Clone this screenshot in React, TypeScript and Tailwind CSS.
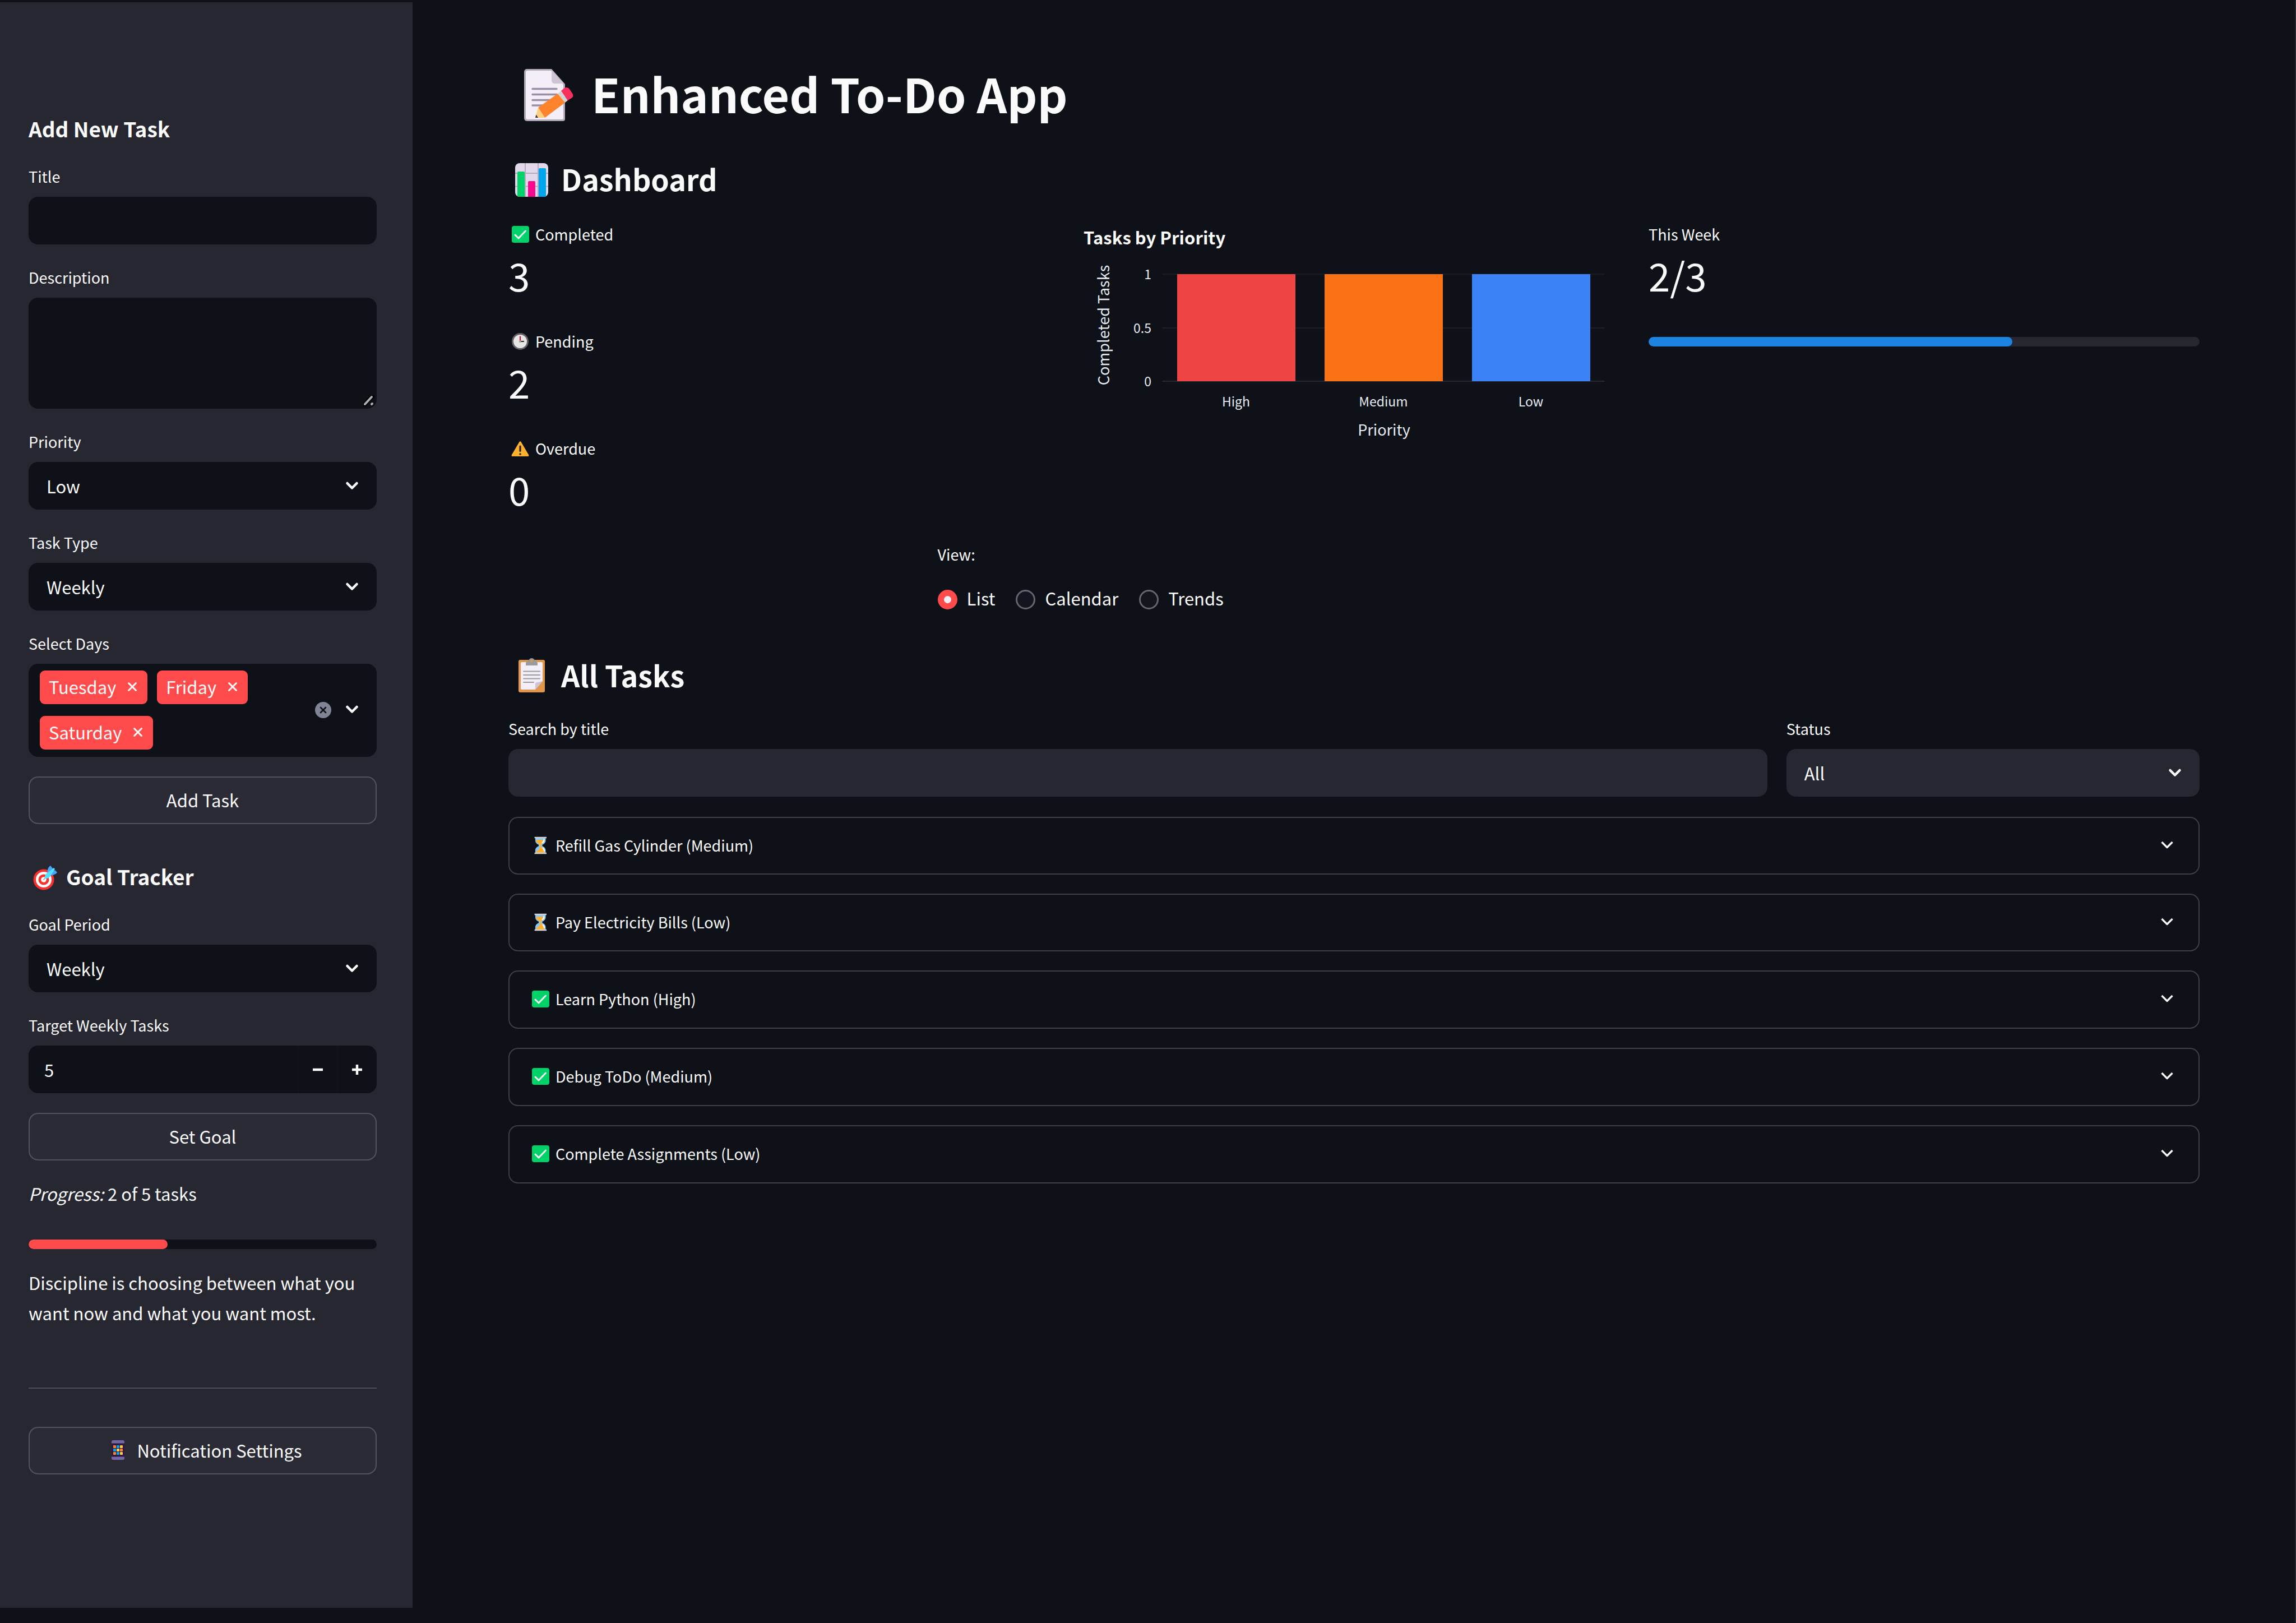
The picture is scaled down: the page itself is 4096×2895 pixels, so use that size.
import { useState, type ReactNode } from "react";

function MemoIcon() {
  return (
    <svg aria-hidden="true" className="h-28 w-[148px] shrink-0" viewBox="0 0 148 112">
      <path d="M33 13h44l24 27v62a4 4 0 0 1-4 4H33a5 5 0 0 1-5-5V18a5 5 0 0 1 5-5z" fill="#b4acbc" />
      <path d="M34 16h42l22 25v60a2 2 0 0 1-2 2H34a3 3 0 0 1-3-3V19a3 3 0 0 1 3-3z" fill="#f3eef8" />
      <path d="M77 15l22 24H82a5 5 0 0 1-5-5z" fill="#cdc4d6" />
      <path d="M43 48.500h43M43 58.500h43M43 68.500h34M43 78h20" stroke="#998ea4" strokeWidth="3.500" strokeLinecap="round" />
      <path d="M53 82l35-25 13 16-36 27z" fill="#ff822d" />
      <path d="M53 82l-5 18h17z" fill="#ffce7c" />
      <path d="M49.500 94.500l-1.500 5.500h5z" fill="#402a32" />
      <path d="M88 57l6-5 12 17-5 4z" fill="#d3d3d3" />
      <path d="M94 52l6-5c3-2 7-1 9 2l4 6c3 4 3 7 1 9l-8 5z" fill="#f92f60" />
    </svg>
  );
}

function ChartIcon() {
  return (
    <svg aria-hidden="true" className="h-[72px] w-[94px] shrink-0" viewBox="0 0 94 72">
      <rect x="12" y="8" width="59" height="60" rx="8" fill="#e1d8ec" />
      <path d="M30 8v60M53 8v60M12 26h59M12 49.500h59" stroke="#b4acbc" strokeWidth="2" />
      <path d="M16 25a2 2 0 0 1 2-2h9a2 2 0 0 1 2 2v43h-9q-3 0-4-1z" fill="#00d26a" />
      <path d="M35 42a2 2 0 0 1 2-2h9a2 2 0 0 1 2 2v26H35z" fill="#f70a8d" />
      <path d="M54 19a2 2 0 0 1 2-2h9a2 2 0 0 1 2 2v48q-2 1-4 1h-9z" fill="#00a6ed" />
    </svg>
  );
}

function ClipboardIcon() {
  return (
    <svg aria-hidden="true" className="h-[72px] w-[94px] shrink-0" viewBox="0 0 94 72">
      <rect x="18" y="9" width="47" height="58" rx="3" fill="#e19747" />
      <path d="M24 13h35a2 2 0 0 1 2 2v32L48 62H24a2 2 0 0 1-2-2V15a2 2 0 0 1 2-2z" fill="#f3eef8" />
      <path d="M48 62V53q0-4 4-4l9-2z" fill="#cdc4d6" />
      <path d="M31 19q-1-8 5-9 2-4 5.500-4t5.500 4q6 1 5 9z" fill="#9b9b9b" />
      <circle cx="41.500" cy="11" r="2.200" fill="#e19747" />
      <path d="M27 29.500h29M27 36h29M27 42.500h29M27 49h18" stroke="#9b9b9b" strokeWidth="2" strokeLinecap="round" />
    </svg>
  );
}

function CheckIcon() {
  return (
    <svg aria-hidden="true" className="h-12 w-12 shrink-0" viewBox="0 0 48 48">
      <rect x="6" y="9" width="31" height="30" rx="4" fill="#00d26a" />
      <path d="M12 25l6 6 12.500-13" fill="none" stroke="#f4f4f4" strokeWidth="3" strokeLinecap="round" strokeLinejoin="round" />
    </svg>
  );
}

function ClockIcon() {
  return (
    <svg aria-hidden="true" className="h-12 w-12 shrink-0" viewBox="0 0 48 48">
      <circle cx="21" cy="24" r="15" fill="#636363" />
      <circle cx="21" cy="24" r="12" fill="#e6e6e6" />
      <path d="M21 24h6" stroke="#212121" strokeWidth="2.200" strokeLinecap="round" />
      <path d="M21 24v-8.500" stroke="#ca0b4a" strokeWidth="2.200" strokeLinecap="round" />
      <circle cx="21" cy="24" r="2" fill="#9b9b9b" />
    </svg>
  );
}

function WarningIcon() {
  return (
    <svg aria-hidden="true" className="h-12 w-12 shrink-0" viewBox="0 0 48 48">
      <path d="M19.300 12.500q1.700-2.500 3.400 0l13.500 23q1 2.500-1.700 2.500H7.500q-2.700 0-1.700-2.500z" fill="#ffb02e" />
      <path d="M21 20v8.500" stroke="#212121" strokeWidth="3.200" strokeLinecap="round" />
      <circle cx="21" cy="34" r="1.800" fill="#212121" />
    </svg>
  );
}

function HourglassIcon() {
  return (
    <svg aria-hidden="true" className="h-12 w-12 shrink-0" viewBox="0 0 48 48">
      <path d="M12 10.500h18.500v4.500c0 4.500-3 6.500-6 7.800v2.400c3 1.300 6 3.300 6 7.800v4.500H12v-4.500c0-4.500 3-6.500 6-7.800v-2.400c-3-1.300-6-3.300-6-7.800z" fill="#83cbff" />
      <path d="M13.500 14h15c0 4.500-3 6.500-6.200 8v4c2.500 1.500 6.200 4.500 6.200 11h-15c0-2.500 2.500-5 6.200-6.500v-8.500c-3.200-1.500-6.200-3.500-6.200-8z" fill="#ffb02e" />
      <path d="M27.500 13.500c0 3-1.200 4.700-3 5.800M25.500 28.500c1.600 1.500 2.500 3 2.500 5.500" fill="none" stroke="#fff" strokeWidth="2" strokeLinecap="round" />
      <path d="M10.600 10h21.400M10.600 38h21.400" stroke="#d3d3d3" strokeWidth="2.400" />
    </svg>
  );
}

function TargetIcon() {
  return (
    <svg aria-hidden="true" className="h-[52px] w-[67px] shrink-0" viewBox="0 0 67 52">
      <circle cx="27" cy="32" r="18.500" fill="#f8312f" />
      <circle cx="27" cy="32" r="14" fill="#fff" />
      <circle cx="27" cy="32" r="9.500" fill="#f8312f" />
      <circle cx="27" cy="32" r="4.800" fill="#fff" />
      <path d="M27 32l7-8" stroke="#9b9b9b" strokeWidth="1.600" strokeLinecap="round" />
      <path d="M34 20c-1-6 1-10 5-13l4 5v5l-6 7z" fill="#46a4fb" />
      <path d="M37 24l5-7 5-2 4 4c-3 4-8 6-14 5z" fill="#46a4fb" />
      <path d="M29 30c-1-5 2-9 6-11l10-8 2 2-7 11c-2 4-6 7-11 6z" fill="#50e2ff" />
    </svg>
  );
}

function PhoneIcon() {
  return (
    <svg aria-hidden="true" className="ml-3 h-[52px] w-9 shrink-0" viewBox="0 0 36 52">
      <rect x="3" y="8" width="23" height="35" rx="3" fill="#321b41" />
      <path d="M6 8h17a3 3 0 0 1 3 3v2.500H3V11a3 3 0 0 1 3-3zM3 37.500h23V40a3 3 0 0 1-3 3H6a3 3 0 0 1-3-3z" fill="#7467a8" />
      <g fill="#ff822d">
        <rect x="6" y="17" width="5" height="5" rx="1" />
        <rect x="18" y="23" width="5" height="5" rx="1" />
        <rect x="6" y="29" width="5" height="5" rx="1" />
      </g>
      <g fill="#00a6ed">
        <rect x="12" y="17" width="5" height="5" rx="1" />
        <rect x="6" y="23" width="5" height="5" rx="1" />
        <rect x="12" y="29" width="5" height="5" rx="1" />
      </g>
      <g fill="#ffce3d">
        <rect x="18" y="17" width="5" height="5" rx="1" />
        <rect x="12" y="23" width="5" height="5" rx="1" />
        <rect x="18" y="29" width="5" height="5" rx="1" />
      </g>
    </svg>
  );
}

function SelectChevron() {
  return (
    <svg aria-hidden="true" className="h-8 w-8" viewBox="0 0 32 32" fill="none" stroke="#fafafa" strokeWidth="4.500" strokeLinecap="round" strokeLinejoin="round">
      <path d="M7.500 11l8.500 8.500 8.500-8.500" />
    </svg>
  );
}

function ExpanderChevron() {
  return (
    <svg aria-hidden="true" className="h-8 w-8 shrink-0" viewBox="0 0 32 32" fill="none" stroke="#fafafa" strokeWidth="3.400" strokeLinejoin="round">
      <path d="M6.500 10l9.500 9.500 9.500-9.500" />
    </svg>
  );
}

function CrossIcon() {
  return (
    <svg aria-hidden="true" className="h-[18px] w-[18px]" viewBox="0 0 18 18" stroke="#fafafa" strokeWidth="3" strokeLinecap="round">
      <path d="M2.500 2.500l13 13M15.500 2.500l-13 13" />
    </svg>
  );
}

function Field({ id, label, children }: { id: string; label: string; children: ReactNode }) {
  return (
    <div className="flex flex-col gap-3">
      <label htmlFor={id} className="text-[27px] leading-[48px]">
        {label}
      </label>
      {children}
    </div>
  );
}

function SelectBox({ id, options, tone, value }: { id: string; options: string[]; tone: "dark" | "light"; value: string }) {
  const [current, setCurrent] = useState(value);
  return (
    <div className="relative">
      <select
        id={id}
        value={current}
        onChange={(e) => setCurrent(e.target.value)}
        className={
          tone === "dark"
            ? "block h-[85px] w-full appearance-none rounded-[17px] bg-[#0e1117] pr-20 pl-8 text-[31px] leading-[50px] outline-none"
            : "block h-[85px] w-full appearance-none rounded-[17px] bg-[#262730] pr-20 pl-8 text-[31px] leading-[50px] outline-none"
        }
      >
        {options.map((o) => (
          <option key={o}>{o}</option>
        ))}
      </select>
      <span className="pointer-events-none absolute inset-y-0 right-7 flex items-center">
        <SelectChevron />
      </span>
    </div>
  );
}

function SideButton({ children }: { children: ReactNode }) {
  return (
    <button type="button" className="flex h-[85px] w-full items-center justify-center rounded-[17px] border-2 border-[#52535b] bg-[#2b2b36] pb-0.5 text-[31px] leading-[50px]">
      {children}
    </button>
  );
}

function Sidebar() {
  const [days, setDays] = useState(["Tuesday", "Friday", "Saturday"]);
  const [target, setTarget] = useState(5);
  return (
    <aside className="mt-1 mb-[27px] w-[736px] shrink-0 bg-[#262730] pr-16 pl-[51px]">
      <form className="flex flex-col gap-[35px]" onSubmit={(e) => e.preventDefault()}>
        <div className="flex flex-col">
          <h3 className="mt-[199px] text-[37px] leading-[52px] font-semibold">Add New Task</h3>
          <div className="mt-9">
            <Field id="title" label="Title">
              <input id="title" type="text" className="h-[85px] w-full rounded-[17px] bg-[#0e1117] px-8 text-[31px] outline-none" />
            </Field>
          </div>
        </div>
        <Field id="description" label="Description">
          <div className="relative">
            <textarea id="description" className="block h-[198px] w-full resize-none rounded-[17px] bg-[#0e1117] px-8 py-4 text-[31px] outline-none" />
            <svg aria-hidden="true" className="pointer-events-none absolute right-1 bottom-1 h-5 w-5" viewBox="0 0 20 20" strokeLinecap="round">
              <path d="M2 17L17 1" stroke="#000" strokeWidth="8" />
              <path d="M3 16L15 3M15 16l1-1" stroke="#b0b0b3" strokeWidth="4" />
            </svg>
          </div>
        </Field>
        <Field id="priority" label="Priority">
          <SelectBox id="priority" tone="dark" value="Low" options={["High", "Medium", "Low"]} />
        </Field>
        <Field id="type" label="Task Type">
          <SelectBox id="type" tone="dark" value="Weekly" options={["Daily", "Weekly", "Monthly"]} />
        </Field>
        <Field id="days" label="Select Days">
          <div className="flex h-[166px] items-center rounded-[17px] bg-[#0e1117] pr-7 pb-0.5 pl-5">
            <ul className="flex flex-1 flex-wrap gap-x-[17px] gap-y-[21px]">
              {days.map((d) => (
                <li key={d} className="flex h-[60px] items-center gap-5 rounded-[9px] bg-[#ff4b4b] pr-[18px] pb-0.5 pl-4 text-[31px] leading-[50px]">
                  <span>{d}</span>
                  <button type="button" aria-label={"Remove " + d} onClick={() => setDays(days.filter((x) => x !== d))}>
                    <CrossIcon />
                  </button>
                </li>
              ))}
            </ul>
            <button id="days" type="button" aria-label="Clear all days" onClick={() => setDays([])} className="mr-[21px]">
              <svg aria-hidden="true" className="h-[29px] w-[29px]" viewBox="0 0 29 29">
                <circle cx="14.500" cy="14.500" r="14.500" fill="#808495" />
                <path d="M10 10l9 9M19 10l-9 9" stroke="#0e1117" strokeWidth="2.600" strokeLinecap="round" />
              </svg>
            </button>
            <SelectChevron />
          </div>
        </Field>
        <SideButton>Add Task</SideButton>
      </form>

      <h3 className="mt-[67px] flex items-center text-[37px] leading-[52px] font-semibold">
        <TargetIcon />
        Goal Tracker
      </h3>
      <form className="mt-9 flex flex-col gap-[35px]" onSubmit={(e) => e.preventDefault()}>
        <Field id="period" label="Goal Period">
          <SelectBox id="period" tone="dark" value="Weekly" options={["Daily", "Weekly", "Monthly"]} />
        </Field>
        <Field id="target" label="Target Weekly Tasks">
          <div className="flex h-[85px] items-center overflow-hidden rounded-[17px] bg-[#0e1117]">
            <input
              id="target"
              type="text"
              inputMode="numeric"
              value={target}
              onChange={(e) => setTarget(Number(e.target.value) || 0)}
              className="h-full min-w-0 flex-1 bg-transparent pl-7 text-[31px] outline-none"
            />
            <button type="button" aria-label="Decrease" onClick={() => setTarget(target - 1)} className="flex h-full w-[69px] items-center justify-center border-l border-[#12151c]">
              <svg aria-hidden="true" className="h-[18px] w-[18px]" viewBox="0 0 18 18">
                <path d="M0 9h18" stroke="#fafafa" strokeWidth="4.400" />
              </svg>
            </button>
            <button type="button" aria-label="Increase" onClick={() => setTarget(target + 1)} className="flex h-full w-[71px] items-center justify-center border-l border-[#12151c]">
              <svg aria-hidden="true" className="h-[18px] w-[18px]" viewBox="0 0 18 18">
                <path d="M0 9h18M9 0v18" stroke="#fafafa" strokeWidth="4.400" />
              </svg>
            </button>
          </div>
        </Field>
        <SideButton>Set Goal</SideButton>
      </form>

      <p className="mt-9 text-[31px] leading-[46px]">
        <em>Progress:</em> 2 of 5 tasks
      </p>
      <div role="progressbar" aria-label="Goal progress" aria-valuenow={40} className="mt-[59px] h-[17px] overflow-hidden rounded-full bg-[#0e1117]">
        <div className="h-full w-2/5 rounded-full bg-[#ff4b4b]" />
      </div>
      <p className="mt-[33px] text-[31px] leading-[54px]">Discipline is choosing between what you want now and what you want most.</p>
      <hr className="mt-[106px] mb-[68px] border-t-2 border-[#4c4d55]" />
      <SideButton>
        <PhoneIcon />
        <span className="ml-3">Notification Settings</span>
      </SideButton>
    </aside>
  );
}

function Metric({ icon, label, value }: { icon?: ReactNode; label: string; value: string }) {
  return (
    <div>
      <div className="flex items-center text-[27px] leading-[48px]">
        {icon}
        {label}
      </div>
      <div className="mt-1.5 text-[69px] leading-[84px]">{value}</div>
    </div>
  );
}

const bars = [
  { name: "High", x: 176, fill: "#ef4444" },
  { name: "Medium", x: 439, fill: "#f97316" },
  { name: "Low", x: 702, fill: "#3b82f6" },
];

const ticks = [
  { name: "1", y: 95, stroke: "#191c23" },
  { name: "0.5", y: 191, stroke: "#1c1f27" },
  { name: "0", y: 286, stroke: "#262930" },
];

function PriorityChart() {
  return (
    <svg role="img" aria-label="Tasks by Priority" className="block w-full" viewBox="0 0 983 520">
      <text x="9" y="42" fontSize="31" fontWeight="700" fill="#fafafa">
        Tasks by Priority
      </text>
      <text x="55" y="186" fontSize="27" fill="#e6eaf1" textAnchor="middle" transform="rotate(-90 55 186)">
        Completed Tasks
      </text>
      {ticks.map((t) => (
        <g key={t.name}>
          <path d={"M149 " + t.y + "H939"} stroke={t.stroke} strokeWidth="2" />
          <text x="130" y={t.y + 9} fontSize="23" fill="#e6eaf1" textAnchor="end">
            {t.name}
          </text>
        </g>
      ))}
      {bars.map((b) => (
        <g key={b.name}>
          <rect x={b.x} y="95" width="211" height="191" fill={b.fill} />
          <text x={b.x + 105} y="331" fontSize="23" fill="#e6eaf1" textAnchor="middle">
            {b.name}
          </text>
        </g>
      ))}
      <text x="545" y="383" fontSize="27" fill="#e6eaf1" textAnchor="middle">
        Priority
      </text>
    </svg>
  );
}

const tasks = [
  { name: "Refill Gas Cylinder (Medium)", done: false },
  { name: "Pay Electricity Bills (Low)", done: false },
  { name: "Learn Python (High)", done: true },
  { name: "Debug ToDo (Medium)", done: true },
  { name: "Complete Assignments (Low)", done: true },
];

export default function App() {
  const [view, setView] = useState("List");
  return (
    <div className="flex min-h-screen border-r-2 border-[#26272f] bg-[#0e1117] font-['Noto_Sans_CJK_SC',sans-serif] text-[#fafafa]">
      <Sidebar />
      <main className="min-w-0 flex-1 pt-[110px] pr-[170px] pl-[171px]">
        <h1 className="flex items-center text-[84px] leading-[112px] font-bold">
          <MemoIcon />
          Enhanced To-Do App
        </h1>
        <h2 className="mt-[61px] flex items-center text-[52px] leading-[72px] font-semibold">
          <ChartIcon />
          Dashboard
        </h2>
        <section className="mt-[39px] grid grid-cols-3 gap-[34px]">
          <div className="flex flex-col gap-[53px]">
            <Metric icon={<CheckIcon />} label="Completed" value="3" />
            <Metric icon={<ClockIcon />} label="Pending" value="2" />
            <Metric icon={<WarningIcon />} label="Overdue" value="0" />
          </div>
          <PriorityChart />
          <div>
            <Metric label="This Week" value="2/3" />
            <div role="progressbar" aria-label="This week" aria-valuenow={66} className="mt-[69px] h-[17px] overflow-hidden rounded-full bg-[#262730]">
              <div className="h-full w-[66%] rounded-full bg-[#1c83e1]" />
            </div>
          </div>
        </section>
        <section className="mt-[51px] flex gap-[34px]">
          <div className="grow basis-[calc(25%-34px)]" />
          <fieldset className="grow basis-[calc(50%-34px)]">
            <legend className="text-[27px] leading-[48px]">View:</legend>
            <div className="mt-[29px] flex gap-[37px]">
              {["List", "Calendar", "Trends"].map((v) => (
                <label key={v} className="flex items-center gap-[17px] text-[31px] leading-[50px]">
                  <input
                    type="radio"
                    name="view"
                    checked={view === v}
                    onChange={() => setView(v)}
                    className="mt-1 h-[35px] w-[35px] appearance-none rounded-full border-3 border-[#65676c] bg-[#13161f] checked:border-[11px] checked:border-[#ff4b4b] checked:bg-[#f0f2f6]"
                  />
                  {v}
                </label>
              ))}
            </div>
          </fieldset>
          <div className="grow basis-[calc(25%-34px)]" />
        </section>
        <h2 className="mt-[76px] flex items-center text-[52px] leading-[72px] font-semibold">
          <ClipboardIcon />
          All Tasks
        </h2>
        <section className="mt-9 flex gap-[34px]">
          <div className="grow basis-[calc(75%-34px)]">
            <Field id="search" label="Search by title">
              <input id="search" type="text" className="h-[85px] w-full rounded-[17px] bg-[#262730] px-8 text-[31px] outline-none" />
            </Field>
          </div>
          <div className="grow basis-[calc(25%-34px)]">
            <Field id="status" label="Status">
              <SelectBox id="status" tone="light" value="All" options={["All", "Pending", "Completed"]} />
            </Field>
          </div>
        </section>
        <section className="mt-9 flex flex-col gap-[34px]">
          {tasks.map((t) => (
            <button
              key={t.name}
              type="button"
              aria-expanded="false"
              className={
                t.done
                  ? "flex h-[104px] items-center rounded-[17px] border-2 border-[#3e4044] pr-10 pb-0.5 pl-[34px] text-[27px] leading-[48px]"
                  : "flex h-[103px] items-center rounded-[17px] border-2 border-[#3e4044] pr-10 pb-0.5 pl-[34px] text-[27px] leading-[48px]"
              }
            >
              {t.done ? <CheckIcon /> : <HourglassIcon />}
              <span className="flex-1 text-left">{t.name}</span>
              <ExpanderChevron />
            </button>
          ))}
        </section>
      </main>
    </div>
  );
}
